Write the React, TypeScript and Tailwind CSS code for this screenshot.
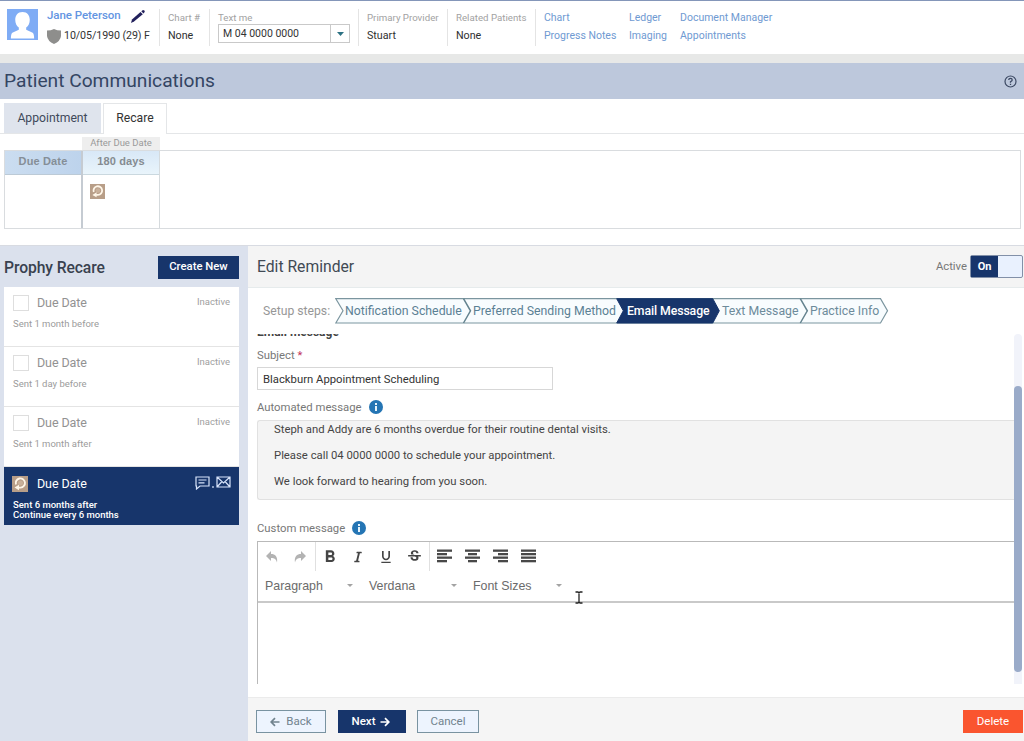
import { Fragment } from 'react';
import type { ReactNode } from 'react';
import { MdFormatBold, MdFormatUnderlined, MdStrikethroughS } from 'react-icons/md';
import { FaItalic } from 'react-icons/fa';

const reminders = [
  { title: 'Due Date', note: 'Sent 1 month before', status: 'Inactive' },
  { title: 'Due Date', note: 'Sent 1 day before', status: 'Inactive' },
  { title: 'Due Date', note: 'Sent 1 month after', status: 'Inactive' },
];

const steps = [
  { label: 'Notification Schedule', width: 'w-[128px]', tone: 'text-[#5b8094]' },
  { label: 'Preferred Sending Method', width: 'w-[154px]', tone: 'text-[#5b8094]' },
  { label: 'Email Message', width: 'w-[95px]', tone: 'text-white font-medium tracking-[-0.1px]' },
  { label: 'Text Message', width: 'w-[88px]', tone: 'text-[#6d8b9b]' },
  { label: 'Practice Info', width: 'w-[78px]', tone: 'text-[#6d8b9b]' },
];

const alignments = [
  { name: 'left', rows: [[0, 15], [0, 10], [0, 15], [0, 10]] },
  { name: 'center', rows: [[0, 15], [3, 9], [0, 15], [3, 9]] },
  { name: 'right', rows: [[0, 15], [5, 10], [0, 15], [5, 10]] },
  { name: 'justify', rows: [[0, 15], [0, 15], [0, 15], [0, 15]] },
];

const links = [
  { items: ['Chart', 'Progress Notes'], width: 'w-[85px]' },
  { items: ['Ledger', 'Imaging'], width: 'w-[51px]' },
  { items: ['Document Manager', 'Appointments'], width: 'w-[110px]' },
];

function HeaderField({ label, value, className }: { label: string; value: string; className: string }) {
  return (
    <div className={`h-[37px] mt-2 border-l border-[#e4e4e4] pl-2 pt-[2px] ${className}`}>
      <div className="text-[9.700px] leading-[13px] text-[#a2a2a2] whitespace-nowrap">{label}</div>
      <div className="mt-[5px] text-[10.700px] leading-[14px] text-[#2f2f2f]">{value}</div>
    </div>
  );
}

function RecareIcon({ className }: { className: string }) {
  return (
    <svg viewBox="0 0 16 16" className={className}>
      <rect width="16" height="16" fill="#b89e88" />
      <circle cx="8.500" cy="7" r="2.500" fill="#c9b19b" />
      <path d="M4 8.500A4.600 4.600 0 1 1 8.500 11.600H6.500" fill="none" stroke="#fff6e8" strokeWidth="1.900" />
      <path d="M2.500 11.600L7 8.800V14.200Z" fill="#fff6e8" />
    </svg>
  );
}

function InfoIcon() {
  return (
    <svg viewBox="0 0 14 14" className="w-[14px] h-[14px]">
      <circle cx="7" cy="7" r="7" fill="#2475b4" />
      <path d="M6 6h2v5H6zM6 3h2v2H6z" fill="#e6f3fb" />
    </svg>
  );
}

function StepShapes() {
  return (
    <svg viewBox="0 0 554 27" className="absolute left-0 top-0 w-[554px] h-[27px]">
      <path d="M.8 .7H545.5L552.500 12.800 545.500 25H.8L8 12.800Z" fill="#f8fcfe" stroke="#7b959f" strokeWidth="1.200" />
      <path d="M128.500 .7L135.500 12.800 128.500 25M465.300 .7L472.300 12.800 465.300 25" fill="none" stroke="#64838f" strokeWidth="1.500" />
      <path d="M281.700 .7H377.800L384.300 12.800 377.800 25H281.700L288.300 12.800Z" fill="#17356b" stroke="#17356b" />
    </svg>
  );
}

function Arrow({ flipped = false }: { flipped?: boolean }) {
  return (
    <svg viewBox="0 0 10 10" className={flipped ? 'w-[10px] h-[10px] rotate-180' : 'w-[10px] h-[10px]'} fill="none" stroke="currentColor" strokeWidth="1.700">
      <path d="M9.500 5H1.500M5 1.200L1.200 5 5 8.800" />
    </svg>
  );
}

function ToolButton({ children }: { children: ReactNode }) {
  return <button className="w-7 h-7 flex items-center justify-center text-[#454545]">{children}</button>;
}

function Select({ label, width }: { label: string; width: string }) {
  return (
    <div className={`flex items-center justify-between ${width}`}>
      <span>{label}</span>
      <svg viewBox="0 0 6 3" className="w-[6px] h-[3px]">
        <path d="M0 0h6L3 3z" fill="#a3a3a3" />
      </svg>
    </div>
  );
}

function PatientHeader() {
  return (
    <header className="h-[54px] shrink-0 flex border-t border-[#8496b9] bg-white">
      <div className="w-[159px] shrink-0 flex pl-[7px] pt-[7px]">
        <svg viewBox="0 0 32 32" className="w-[31px] h-[33px] shrink-0">
          <rect width="32" height="32" fill="#7facf5" />
          <path d="M16 3c-5 0-7.5 3.500-7.500 8 0 3.500 1.500 6.500 3.700 8.200v2.300L5.500 24.500Q4 25.500 4 30.500H28Q28 25.500 26.500 24.500L19.800 21.500V19.200C22 17.500 23.500 14.500 23.500 11 23.500 6.500 21 3 16 3Z" fill="#fff" />
        </svg>
        <div className="ml-[9px] pt-[1px]">
          <div className="h-[14px] flex items-center">
            <span className="text-[11.500px] font-medium text-[#6395e2] tracking-[-0.05px] whitespace-nowrap">Jane Peterson</span>
            <svg viewBox="0 0 14 13" className="ml-[10px] w-[14px] h-[13px]">
              <path d="M0 13L1 9.500 9.500 2 11.800 4.200 3 11.500Z" fill="#22205c" />
              <path d="M10.300 1.300L12 0Q14 0 13.800 1.800L12.500 3.500Z" fill="#22205c" />
            </svg>
          </div>
          <div className="mt-[5px] h-4 flex items-center">
            <svg viewBox="0 0 14 15" className="w-[14px] h-[15px]">
              <path d="M7 0Q10 1.500 14 1.500V7Q13.500 12 7 15 .5 12 0 7V1.500Q4 1.500 7 0Z" fill="#8e8e8c" />
            </svg>
            <span className="ml-[3px] text-[10.700px] text-[#333] tracking-[-0.1px] whitespace-nowrap">10/05/1990 (29) F</span>
          </div>
        </div>
      </div>
      <HeaderField label="Chart #" value="None" className="w-[50px]" />
      <div className="w-[149px] h-[37px] mt-2 border-l border-[#e4e4e4] pl-2 pt-[2px]">
        <div className="text-[9.700px] leading-[13px] text-[#a2a2a2]">Text me</div>
        <div className="w-[132px] h-[19px] flex border border-[#c9c9c9] text-[10.500px] leading-[17px] text-[#333]">
          <span className="flex-1 pl-[4px]">M 04 0000 0000</span>
          <span className="w-[19px] border-l border-[#c9c9c9] flex items-center justify-center">
            <svg viewBox="0 0 7 4" className="w-[7px] h-[4px]">
              <path d="M0 0h7L3.500 4z" fill="#2c7183" />
            </svg>
          </span>
        </div>
      </div>
      <HeaderField label="Primary Provider" value="Stuart" className="w-[89px]" />
      <HeaderField label="Related Patients" value="None" className="w-[88px]" />
      <nav className="h-[37px] mt-2 border-l border-[#e4e4e4] pl-2 pt-[2px] flex text-[10.500px] text-[#6f9ad2]">
        {links.map((group) => (
          <div key={group.items[0]} className={group.width}>
            {group.items.map((item) => (
              <a key={item} className="block h-[17.500px] leading-[13px] whitespace-nowrap">{item}</a>
            ))}
          </div>
        ))}
      </nav>
    </header>
  );
}

function Timeline() {
  return (
    <section className="h-[111px] shrink-0 bg-white pl-1 pr-[3px]">
      <div className="h-[16px] flex items-end">
        <div className="ml-[78px] w-[78px] h-[13px] bg-[#eeeeee] text-center text-[9.500px] leading-[11px] text-[#9a9a9a]">After Due Date</div>
      </div>
      <div className="h-[79px] flex border border-[#d9dcdf] font-['Liberation_Sans',sans-serif]">
        <div className="w-[78px] border-r-2 border-[#c5cbd2]">
          <div className="h-6 border-b border-[#bccad6] bg-gradient-to-r from-[#cbddf0] to-[#bdd3ec] text-center text-[11px] leading-[21px] font-bold tracking-[0.15px] text-[#858e97]">Due Date</div>
        </div>
        <div className="w-[77px] border-r border-[#d5dadd]">
          <div className="h-6 border-b border-[#cad8df] bg-gradient-to-b from-[#d8e8f7] to-[#e9f4fb] text-center text-[11px] leading-[21px] font-bold tracking-[0.1px] text-[#858b91]">180 days</div>
          <RecareIcon className="ml-[7px] mt-[9px] w-[15px] h-[15px]" />
        </div>
      </div>
    </section>
  );
}

function Sidebar() {
  return (
    <aside className="w-[248px] shrink-0 bg-[#dbe1ed] pl-1 pr-[9px]">
      <div className="h-[41px] flex items-center justify-between pt-[2px]">
        <h2 className="text-[15.700px] font-medium text-[#39414f] tracking-[-0.1px]">Prophy Recare</h2>
        <button className="w-[81px] h-[23px] bg-[#17356b] text-[11.300px] font-medium text-white">Create New</button>
      </div>
      {reminders.map((r) => (
        <div key={r.note} className="h-[60px] bg-white border-b border-[#e4e4e4] px-[9px] pt-2">
          <div className="h-4 flex items-center">
            <span className="w-4 h-4 border border-[#dedede]" />
            <span className="ml-2 text-[12.500px] text-[#929292] tracking-[-0.1px]">{r.title}</span>
            <span className="ml-auto mt-[-1px] text-[9.500px] text-[#a0a0a0]">{r.status}</span>
          </div>
          <p className="mt-[7px] text-[9.500px] leading-3 text-[#9b9b9b]">{r.note}</p>
        </div>
      ))}
      <div className="h-[58px] bg-[#17356b] px-2 pt-[9px] text-white">
        <div className="h-4 flex items-center">
          <RecareIcon className="w-4 h-4" />
          <span className="ml-[9px] text-[12.500px] tracking-[-0.1px]">Due Date</span>
          <svg viewBox="0 0 36 14" className="ml-auto mt-[-2px] w-9 h-[14px]" fill="none" stroke="#d8e4fb" strokeWidth="1.200">
            <path d="M1 1H14V10H5L1.500 13V10H1ZM3.500 4H11.500M3.500 6.800H9.500" />
            <path d="M18 10v2" />
            <path d="M22 1H35V11H22ZM22 1L28.500 7 35 1M22 11L27 5.500M35 11L30 5.500" />
          </svg>
        </div>
        <p className="mt-[8px] pl-[1px] text-[9.500px] leading-[10px] font-medium">
          Sent 6 months after
          <br />
          Continue every 6 months
        </p>
      </div>
    </aside>
  );
}

function FieldLabel({ text }: { text: string }) {
  return (
    <div className="h-4 flex items-center gap-[7px] text-[11.300px] leading-4 text-[#777]">
      <span className="pt-[1px]">{text}</span>
      <InfoIcon />
    </div>
  );
}

function Editor() {
  return (
    <div className="mt-[5px] h-[143px] border-t border-l border-[#b9b9b9]">
      <div className="h-[29px] flex items-center">
        <ToolButton>
          <svg viewBox="0 0 12 12" className="w-3 h-3" fill="#b3b3b3">
            <path d="M5 0V3C9 3 12 5.500 11 11.500 10 8 8.500 7 5 7V10L0 5Z" />
          </svg>
        </ToolButton>
        <ToolButton>
          <svg viewBox="0 0 12 12" className="w-3 h-3" fill="#b3b3b3">
            <path d="M7 0V3C3 3 0 5.500 1 11.500 2 8 3.500 7 7 7V10L12 5Z" />
          </svg>
        </ToolButton>
        <span className="ml-[1px] w-px h-[29px] bg-[#e0e0e0]" />
        <ToolButton><MdFormatBold size={20} /></ToolButton>
        <ToolButton><FaItalic size={12} /></ToolButton>
        <ToolButton><MdFormatUnderlined size={16} /></ToolButton>
        <ToolButton><MdStrikethroughS size={17} /></ToolButton>
        <span className="ml-[1px] w-px h-[29px] bg-[#e0e0e0]" />
        {alignments.map((a) => (
          <ToolButton key={a.name}>
            <svg viewBox="0 0 15 14" className="w-[15px] h-[14px] mb-[2px]" fill="#484848">
              {a.rows.map(([x, width], i) => (
                <rect key={i} x={x} y={0.5 + i * 3.5} width={width} height="2.300" />
              ))}
            </svg>
          </ToolButton>
        ))}
      </div>
      <div className="h-[32px] flex items-center gap-4 pl-[7px] border-b-2 border-[#c9c9c9] font-['Liberation_Sans',sans-serif] text-[12.400px] text-[#6b6b6b]">
        <Select label="Paragraph" width="w-[88px]" />
        <Select label="Verdana" width="w-[88px]" />
        <Select label="Font Sizes" width="w-[89px]" />
      </div>
    </div>
  );
}

function ReminderForm() {
  return (
    <main className="flex-1 min-w-0 flex flex-col bg-white">
      <div className="h-[42px] shrink-0 flex items-center bg-[#f4f4f4] border-b border-[#e6ebec] pl-[9px] pr-[1px]">
        <h2 className="text-[15.700px] text-[#414a54]">Edit Reminder</h2>
        <span className="ml-auto pt-[2px] text-[11.300px] text-[#777]">Active</span>
        <div className="ml-[3px] w-[53px] h-[23px] flex border border-[#8290a8] bg-[#e9f1fe] rounded-[2px]">
          <span className="w-[27px] bg-[#17356b] text-center text-[11px] leading-[22px] font-bold text-white">On</span>
        </div>
      </div>

      <div className="h-[46px] shrink-0 flex pt-[10px] pl-[15px]">
        <span className="w-[72px] text-[12.200px] leading-[27px] text-[#979797] whitespace-nowrap">Setup steps:</span>
        <div className="relative h-[27px] w-[554px]">
          <StepShapes />
          <div className="relative flex pl-[10px] text-[12.300px] leading-[26px] whitespace-nowrap">
            {steps.map((step) => (
              <span key={step.label} className={`${step.width} ${step.tone}`}>{step.label}</span>
            ))}
          </div>
        </div>
      </div>

      <div className="h-[350px] shrink-0 flex overflow-hidden">
        <div className="flex-1 min-w-0 pl-[9px]">
          {/* Section title is half scrolled under the step bar */}
          <div className="h-[13px] overflow-hidden">
            <h3 className="mt-[-10px] text-[12px] leading-4 font-bold text-[#444]">Email message</h3>
          </div>
          <div className="h-4 text-[11.300px] leading-[18px] text-[#777]">
            Subject <span className="text-[#c0305a]">*</span>
          </div>
          <div className="mt-[4px] w-[296px] h-[23px] border border-[#d7d7d7] pl-[5px] text-[11.300px] leading-[23px] text-[#333]">Blackburn Appointment Scheduling</div>
          <div className="h-[9px]" />
          <FieldLabel text="Automated message" />
          <div className="mt-[5px] h-[80px] border border-r-0 border-[#e1e1e1] rounded-l-[3px] bg-[#f4f4f4] pl-4 text-[11.300px] text-[#444]">
            <p className="h-[26px] leading-[18px]">Steph and Addy are 6 months overdue for their routine dental visits.</p>
            <p className="h-[26px] leading-[18px]">Please call 04 0000 0000 to schedule your appointment.</p>
            <p className="h-[26px] leading-[18px]">We look forward to hearing from you soon.</p>
          </div>
          <div className="h-[20px]" />
          <FieldLabel text="Custom message" />
          <Editor />
        </div>
        <div className="w-[8px] mr-[2px] pt-[52px] bg-[#f1f3fa] rounded-t-full">
          <div className="h-[286px] rounded-full bg-[#9aabc9]" />
        </div>
      </div>

      <footer className="mt-auto h-[44px] shrink-0 flex items-center border-t border-[#ebebeb] bg-[#f5f5f5] pl-2 pr-[1px] pt-1 text-[11.500px]">
        <button className="w-[70px] h-[23px] flex items-center justify-center gap-[6px] border border-[#7993a1] bg-[#edf4fe] text-[#71838e]">
          <Arrow />
          Back
        </button>
        <button className="ml-[12px] w-[68px] h-[23px] flex items-center justify-center gap-[5px] bg-[#17356b] pr-[2px] font-medium text-white">
          Next
          <Arrow flipped />
        </button>
        <button className="ml-[11px] w-[62px] h-[23px] border border-[#7993a1] bg-[#edf4fe] text-[#71838e]">Cancel</button>
        <button className="ml-auto w-[60px] h-[23px] bg-[#fa552f] text-white">Delete</button>
      </footer>
    </main>
  );
}

export default function App() {
  return (
    <Fragment>
      <div className="w-[1024px] h-[741px] flex flex-col overflow-hidden bg-white font-[Roboto,sans-serif]">
        <PatientHeader />
        <div className="h-[9px] shrink-0 bg-[#e7e8e7]" />
        <div className="h-9 shrink-0 flex items-center justify-between bg-[#bdc8dc] pl-1 pr-[7px]">
          <h1 className="text-[19.200px] text-[#344563]">Patient Communications</h1>
          <svg viewBox="0 0 13 13" className="w-[13px] h-[13px]" fill="none" stroke="#3c4963">
            <circle cx="6.500" cy="6.500" r="5.500" strokeWidth="1.200" />
            <path d="M4.700 5Q4.800 3.300 6.500 3.300 8.200 3.300 8.200 4.900 8.200 5.800 6.500 6.700V7.800M6.500 8.800V10" strokeWidth="1.300" />
          </svg>
        </div>
        <div className="h-[35px] shrink-0 flex items-end bg-white text-[12.200px]">
          <div className="self-stretch w-[4px] border-b border-[#e4e6e8]" />
          <div className="w-[97px] h-[31px] border-b border-[#e4e6e8] bg-[#dfe4ed] text-center leading-[30px] text-[#3f4a5b]">Appointment</div>
          <div className="self-stretch w-[2px] border-b border-[#e4e6e8]" />
          <div className="w-[64px] h-[31px] border border-b-0 border-[#e4e6e8] text-center leading-[28px] text-[#333]">Recare</div>
          <div className="self-stretch flex-1 border-b border-[#e4e6e8]" />
        </div>
        <Timeline />
        <div className="flex-1 min-h-0 flex border-t border-[#d8dbe2]">
          <Sidebar />
          <ReminderForm />
        </div>
      </div>
      {/* Text cursor resting on the editor divider */}
      <svg viewBox="0 0 8 13" className="absolute left-[575px] top-[591px] w-2 h-[13px]" fill="none" stroke="#222" strokeWidth="1.300">
        <path d="M.5 1H3L4 2 5 1H7.500M4 1.500V11.500M.5 12H3L4 11 5 12H7.500" />
      </svg>
    </Fragment>
  );
}
